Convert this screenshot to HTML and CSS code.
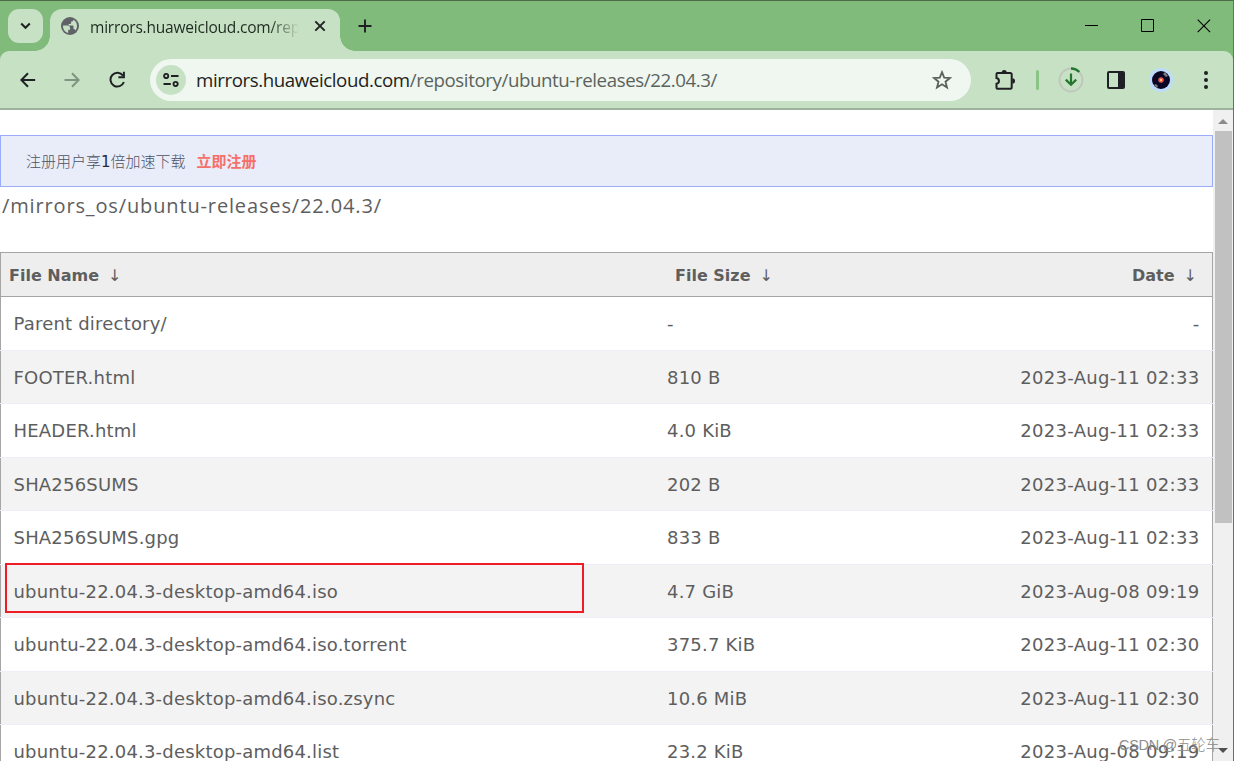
FILE: index.html
```html
<!DOCTYPE html>
<html lang="zh">
<head>
<meta charset="utf-8">
<title>mirrors.huaweicloud.com</title>
<link rel="stylesheet" href="styles.css">
</head>
<body>
<div class="window">
  <header class="tabstrip">
    <button class="tab-search"><svg width="35" height="34" viewBox="0 0 35 34"><path d="M13.2 14.5l4.3 4.3 4.3-4.3" fill="none" stroke="#1f2023" stroke-width="2"/></svg></button>
    <div class="tab">
      <svg class="globe" width="18" height="18" viewBox="0 0 18 18"><circle cx="9" cy="9" r="9" fill="#5f6368"/><path d="M2 8.6h4.2c1.8 0 2.9 1 2.9 2.7v1.4H7.2v3.2C3.9 15.3 1.8 12.200 2 8.600z" fill="#c7e1c5"/><path d="M10.700 2.100c3.200.800 5.300 3.500 5.300 6.900 0 1.700-.6 3.300-1.500 4.400-.3-1-1-1.500-2-1.500V9.600c0-.6-.4-1-1-1H7.600V6.900h1.600c.6 0 .9-.4.900-.9V4.500h.9c1 0 1.500-.8 1.200-1.700z" fill="#c7e1c5"/></svg>
      <span class="tab-title">mirrors.huaweicloud.com/rep</span>
      <svg class="tab-close" width="12" height="12" viewBox="0 0 12 12"><path d="M1.3 1.3l9.4 9.4M10.7 1.3l-9.4 9.4" stroke="#1f2023" stroke-width="1.9"/></svg>
    </div>
    <svg class="new-tab" width="14" height="14" viewBox="0 0 14 14"><path d="M7 .5v13M.5 7h13" stroke="#1f2023" stroke-width="1.9"/></svg>
    <div class="controls">
      <svg width="14" height="14" viewBox="0 0 14 14"><path d="M0 6.500h13" stroke="#000"/></svg>
      <svg width="14" height="14" viewBox="0 0 14 14"><path d="M.5 .5h12v12H.5z" fill="none" stroke="#000"/></svg>
      <svg width="14" height="14" viewBox="0 0 14 14"><path d="M.7 .7l12.4 12.4M13.1 .7L.7 13.1" stroke="#000" stroke-width="1.1"/></svg>
    </div>
  </header>
  <nav class="toolbar">
    <svg width="16" height="16" viewBox="0 0 16 16"><path d="M15.2 8H1.8M8 1.3L1.4 8 8 14.7" fill="none" stroke="#1f2023" stroke-width="2"/></svg>
    <svg class="forward" width="16" height="16" viewBox="0 0 16 16"><path d="M.5 8h13.8M8 1.3L14.6 8 8 14.7" fill="none" stroke="#7f947e" stroke-width="2"/></svg>
    <svg class="reload" width="17" height="17" viewBox="0 0 17 17"><path d="M14 4.6A6.9 6.9 0 1 0 14.9 11" fill="none" stroke="#1f2023" stroke-width="2"/><path d="M14.9.8v5.5H9.4" fill="none" stroke="#1f2023" stroke-width="2"/></svg>
    <div class="omnibox">
      <span class="site"><svg width="16" height="14" viewBox="0 0 16 14" fill="none" stroke="#1f2023" stroke-width="1.9"><circle cx="3.2" cy="3" r="2.1"/><path d="M8 3h7.5M.5 11h7.3"/><circle cx="12.6" cy="11" r="2.1"/></svg></span>
      <span class="url"><b>mirrors.huaweicloud.com</b>/repository/ubuntu-releases/22.04.3/</span>
      <svg class="star" width="20" height="20" viewBox="0 0 20 20"><path d="M10 2.2l2.2 5.4 5.8.4-4.5 3.7 1.5 5.7-5-3.2-5 3.2 1.500-5.7L2 8l5.8-.4z" fill="none" stroke="#5a625a" stroke-width="1.8"/></svg>
    </div>
    <div class="actions">
      <svg width="24" height="24" viewBox="0 0 24 24"><path d="M4.500 5h12.700q1.500 0 1.500 1.500v12.700q0 1.500-1.500 1.500H4.500q-1 0-1-1v-3.900c3.300-.7 3.300-5 0-5.700V6q0-1 1-1z" fill="none" stroke="#1f2023" stroke-width="2"/><path d="M8.700 4.400a2.500 2.500 0 0 1 5 0zM19.300 10.200a2.700 2.700 0 0 1 0 5.400z" fill="#1f2023"/></svg>
      <i class="divider"></i>
      <svg width="26" height="26" viewBox="0 0 26 26"><circle cx="13" cy="13" r="11.5" fill="none" stroke="#c2c7bd" stroke-width="2"/><path d="M13 1.5A11.5 11.5 0 0 1 21.3 5" fill="none" stroke="#24752f" stroke-width="2.3"/><path d="M13 6.5v11M7.8 12.6l5.2 5.2 5.2-5.2" fill="none" stroke="#24752f" stroke-width="2.2"/></svg>
      <svg class="panel" width="18" height="18" viewBox="0 0 18 18"><rect x="1" y="1" width="16" height="16" rx="1" fill="none" stroke="#1f2023" stroke-width="2"/><path d="M11 1h6v16h-6z" fill="#1f2023"/></svg>
      <svg class="avatar" width="24" height="24" viewBox="0 0 24 24"><circle cx="12" cy="12" r="12" fill="#bddcfa"/><circle cx="12" cy="12" r="9" fill="#090522"/><path d="M14 6l2-2 3 4-2 1zM5 17l2-1 2 2-1 2z" fill="#777b86"/><circle cx="12" cy="12" r="2.8" fill="#e54e51"/><circle cx="12" cy="12" r="1.2" fill="#ffd273"/></svg>
      <svg class="menu" width="4" height="18" viewBox="0 0 4 18" fill="#1f2023"><circle cx="2" cy="2" r="2"/><circle cx="2" cy="9" r="2"/><circle cx="2" cy="16" r="2"/></svg>
    </div>
  </nav>
  <div class="viewport">
    <main class="page">
      <div class="banner"><span>注册用户享<em>1</em>倍加速下载</span><strong>立即注册</strong></div>
      <h1>/mirrors_os/ubuntu-releases/22.04.3/</h1>
      <div class="files">
        <div class="head"><span class="hname">File Name<i>↓</i></span><span class="hsize">File Size<i>↓</i></span><span class="hdate">Date<i>↓</i></span></div>
        <div class="row"><span class="name">Parent directory/</span><span class="size">-</span><span class="date">-</span></div>
        <div class="row"><span class="name">FOOTER.html</span><span class="size">810 B</span><span class="date">2023-Aug-11 02:33</span></div>
        <div class="row"><span class="name">HEADER.html</span><span class="size">4.0 KiB</span><span class="date">2023-Aug-11 02:33</span></div>
        <div class="row"><span class="name">SHA256SUMS</span><span class="size">202 B</span><span class="date">2023-Aug-11 02:33</span></div>
        <div class="row"><span class="name">SHA256SUMS.gpg</span><span class="size">833 B</span><span class="date">2023-Aug-11 02:33</span></div>
        <div class="row marked"><span class="name">ubuntu-22.04.3-desktop-amd64.iso</span><span class="size">4.7 GiB</span><span class="date">2023-Aug-08 09:19</span></div>
        <div class="row"><span class="name">ubuntu-22.04.3-desktop-amd64.iso.torrent</span><span class="size">375.7 KiB</span><span class="date">2023-Aug-11 02:30</span></div>
        <div class="row"><span class="name">ubuntu-22.04.3-desktop-amd64.iso.zsync</span><span class="size">10.6 MiB</span><span class="date">2023-Aug-11 02:30</span></div>
        <div class="row"><span class="name">ubuntu-22.04.3-desktop-amd64.list</span><span class="size">23.2 KiB</span><span class="date">2023-Aug-08 09:19</span></div>
      </div>
    </main>
    <aside class="scrollbar"><i class="up"></i><i class="thumb"></i><i class="down"></i></aside>
  </div>
  <div class="watermark">CSDN @五轮车</div>
</div>
</body>
</html>
```
FILE: styles.css
```css
*, *::before, *::after { box-sizing: border-box; }
body { margin: 0; overflow: hidden; }
svg { display: block; flex: none; }
i, em { font-style: normal; }
.window { position: relative; display: flex; flex-direction: column; width: 1234px; height: 761px; overflow: hidden; background: linear-gradient(#81bb7b 70px, #fff 70px); border-right: 1px solid #6b6f6b; }
.tabstrip { display: flex; height: 51px; flex: none; padding: 8px 22px 0 8px; background: #81bb7b; border-top: 1px solid #4c6b49; }
.tab-search { width: 35px; height: 34px; padding: 0; border: 0; border-radius: 11px; background: #c7e1c5; }
.tab { position: relative; display: flex; align-items: flex-start; width: 290px; height: 42px; margin-left: 7px; padding: 8px 14px 0 11px; border-radius: 12px 12px 0 0; background: #c7e1c5; }
.tab::before, .tab::after { content: ""; position: absolute; bottom: 0; width: 15px; height: 15px; }
.tab::before { left: -15px; background: radial-gradient(circle at 0 0, transparent 14.5px, #c7e1c5 15px); }
.tab::after { right: -15px; background: radial-gradient(circle at 100% 0, transparent 14.5px, #c7e1c5 15px); }
.tab-title { width: 209px; margin: -1px 0 0 11px; overflow: hidden; white-space: nowrap; font: 15.5px/23px "Open Sans", sans-serif; letter-spacing: -.2px; color: #1f2b1f; -webkit-mask-image: linear-gradient(90deg, #000 86%, transparent 100%); }
.tab-close { margin: 3px 0 0 auto; }
.new-tab { margin: 10px 0 0 18px; }
.controls { display: flex; gap: 42px; margin: 10px 0 0 auto; }
.toolbar { display: flex; align-items: center; height: 59px; flex: none; padding: 0 24px 0 20px; background: #c7e1c5; border-bottom: 2px solid #9db39b; border-radius: 9px 9px 0 0; }
.forward { margin-left: 28px; }
.reload { margin-left: 29px; }
.omnibox { display: flex; align-items: center; width: 821px; height: 42px; flex: none; margin: 1px 0 0 24px; padding: 0 19px 0 6px; border-radius: 21px; background: #eff7f0; }
.site { display: flex; align-items: center; justify-content: center; width: 30px; height: 30px; border-radius: 50%; background: #c7e1c5; }
.url { margin-left: 10px; font: 18.7px/28px "Open Sans", sans-serif; letter-spacing: -.41px; white-space: nowrap; color: #5c635d; }
.url b { font-weight: 400; color: #1f2320; }
.star { margin-left: auto; }
.actions { display: flex; align-items: center; margin: 1px 0 0 22px; flex: none; }
.divider { width: 3px; height: 20px; margin: 0 19px 0 19px; border-radius: 2px; background: #8bc485; }
.panel { margin-left: 23px; }
.avatar { margin-left: 24px; }
.menu { margin-left: 31px; }
.viewport { display: flex; height: 651px; flex: none; background: #fff; }
.page { width: 1213px; flex: none; padding-top: 25px; font-family: "DejaVu Sans", sans-serif; color: #5e5e5e; }
.banner { display: flex; align-items: center; height: 52px; padding-left: 25px; border: 1px solid #9bacf8; background: #e9edfa; color: #4d5363; font: 300 15px/22px "Noto Sans CJK SC", sans-serif; }
.banner em { font: 15px/22px "DejaVu Sans", sans-serif; color: #252b3a; }
.banner strong { margin-left: 11px; color: #f66f6a; font-weight: 700; }
h1 { margin: 4px 0 0; height: 61px; padding-left: 2px; font: 400 20px/30px "Open Sans", "Noto Sans", sans-serif; letter-spacing: .86px; }
.head, .row { display: grid; grid-template-columns: 666px 300px 1fr; align-items: center; border-left: 1px solid #a5a5a5; border-right: 1px solid #a5a5a5; }
.head { height: 45px; padding-top: 1px; border: 1px solid #a5a5a5; background: #eee; font-size: 16px; font-weight: 700; }
.head i { margin-left: 9px; font-family: "DejaVu Sans", sans-serif; font-weight: 400; }
.hname { padding-left: 8px; }
.hsize { padding-left: 8px; }
.hdate { padding-right: 15px; text-align: right; }
.row { position: relative; height: 53.5px; padding-top: 1px; font-size: 18px; line-height: 24px; letter-spacing: .2px; }
.row:nth-child(odd) { background: #f3f3f3; }
.row::after { content: ""; position: absolute; left: -1px; right: -1px; bottom: 0; height: 1px; background: #eef0f7; }
.name { padding-left: 12.5px; }
.date { padding-right: 12.5px; text-align: right; letter-spacing: .3px; }
.marked::before { content: ""; position: absolute; z-index: 2; left: 4px; top: -2px; width: 579px; height: 50px; border: 2px solid #ee1c25; }
.scrollbar { display: flex; flex-direction: column; align-items: center; width: 20px; padding: 9px 0 8px; background: #f0f0f0; }
.up, .down { width: 0; height: 0; border: 5px solid transparent; }
.up { border-top: 0; border-bottom-color: #8b8b8b; }
.thumb { width: 17px; height: 392px; margin: 7px 0 auto 1px; background: #c1c1c1; }
.down { border-bottom: 0; border-top-color: #505050; }
.watermark { position: absolute; left: 1119px; top: 735px; font: 300 14.5px/20px "Liberation Sans", "Noto Sans CJK SC", sans-serif; letter-spacing: -.3px; color: #8d8d8d; white-space: nowrap; }
```
